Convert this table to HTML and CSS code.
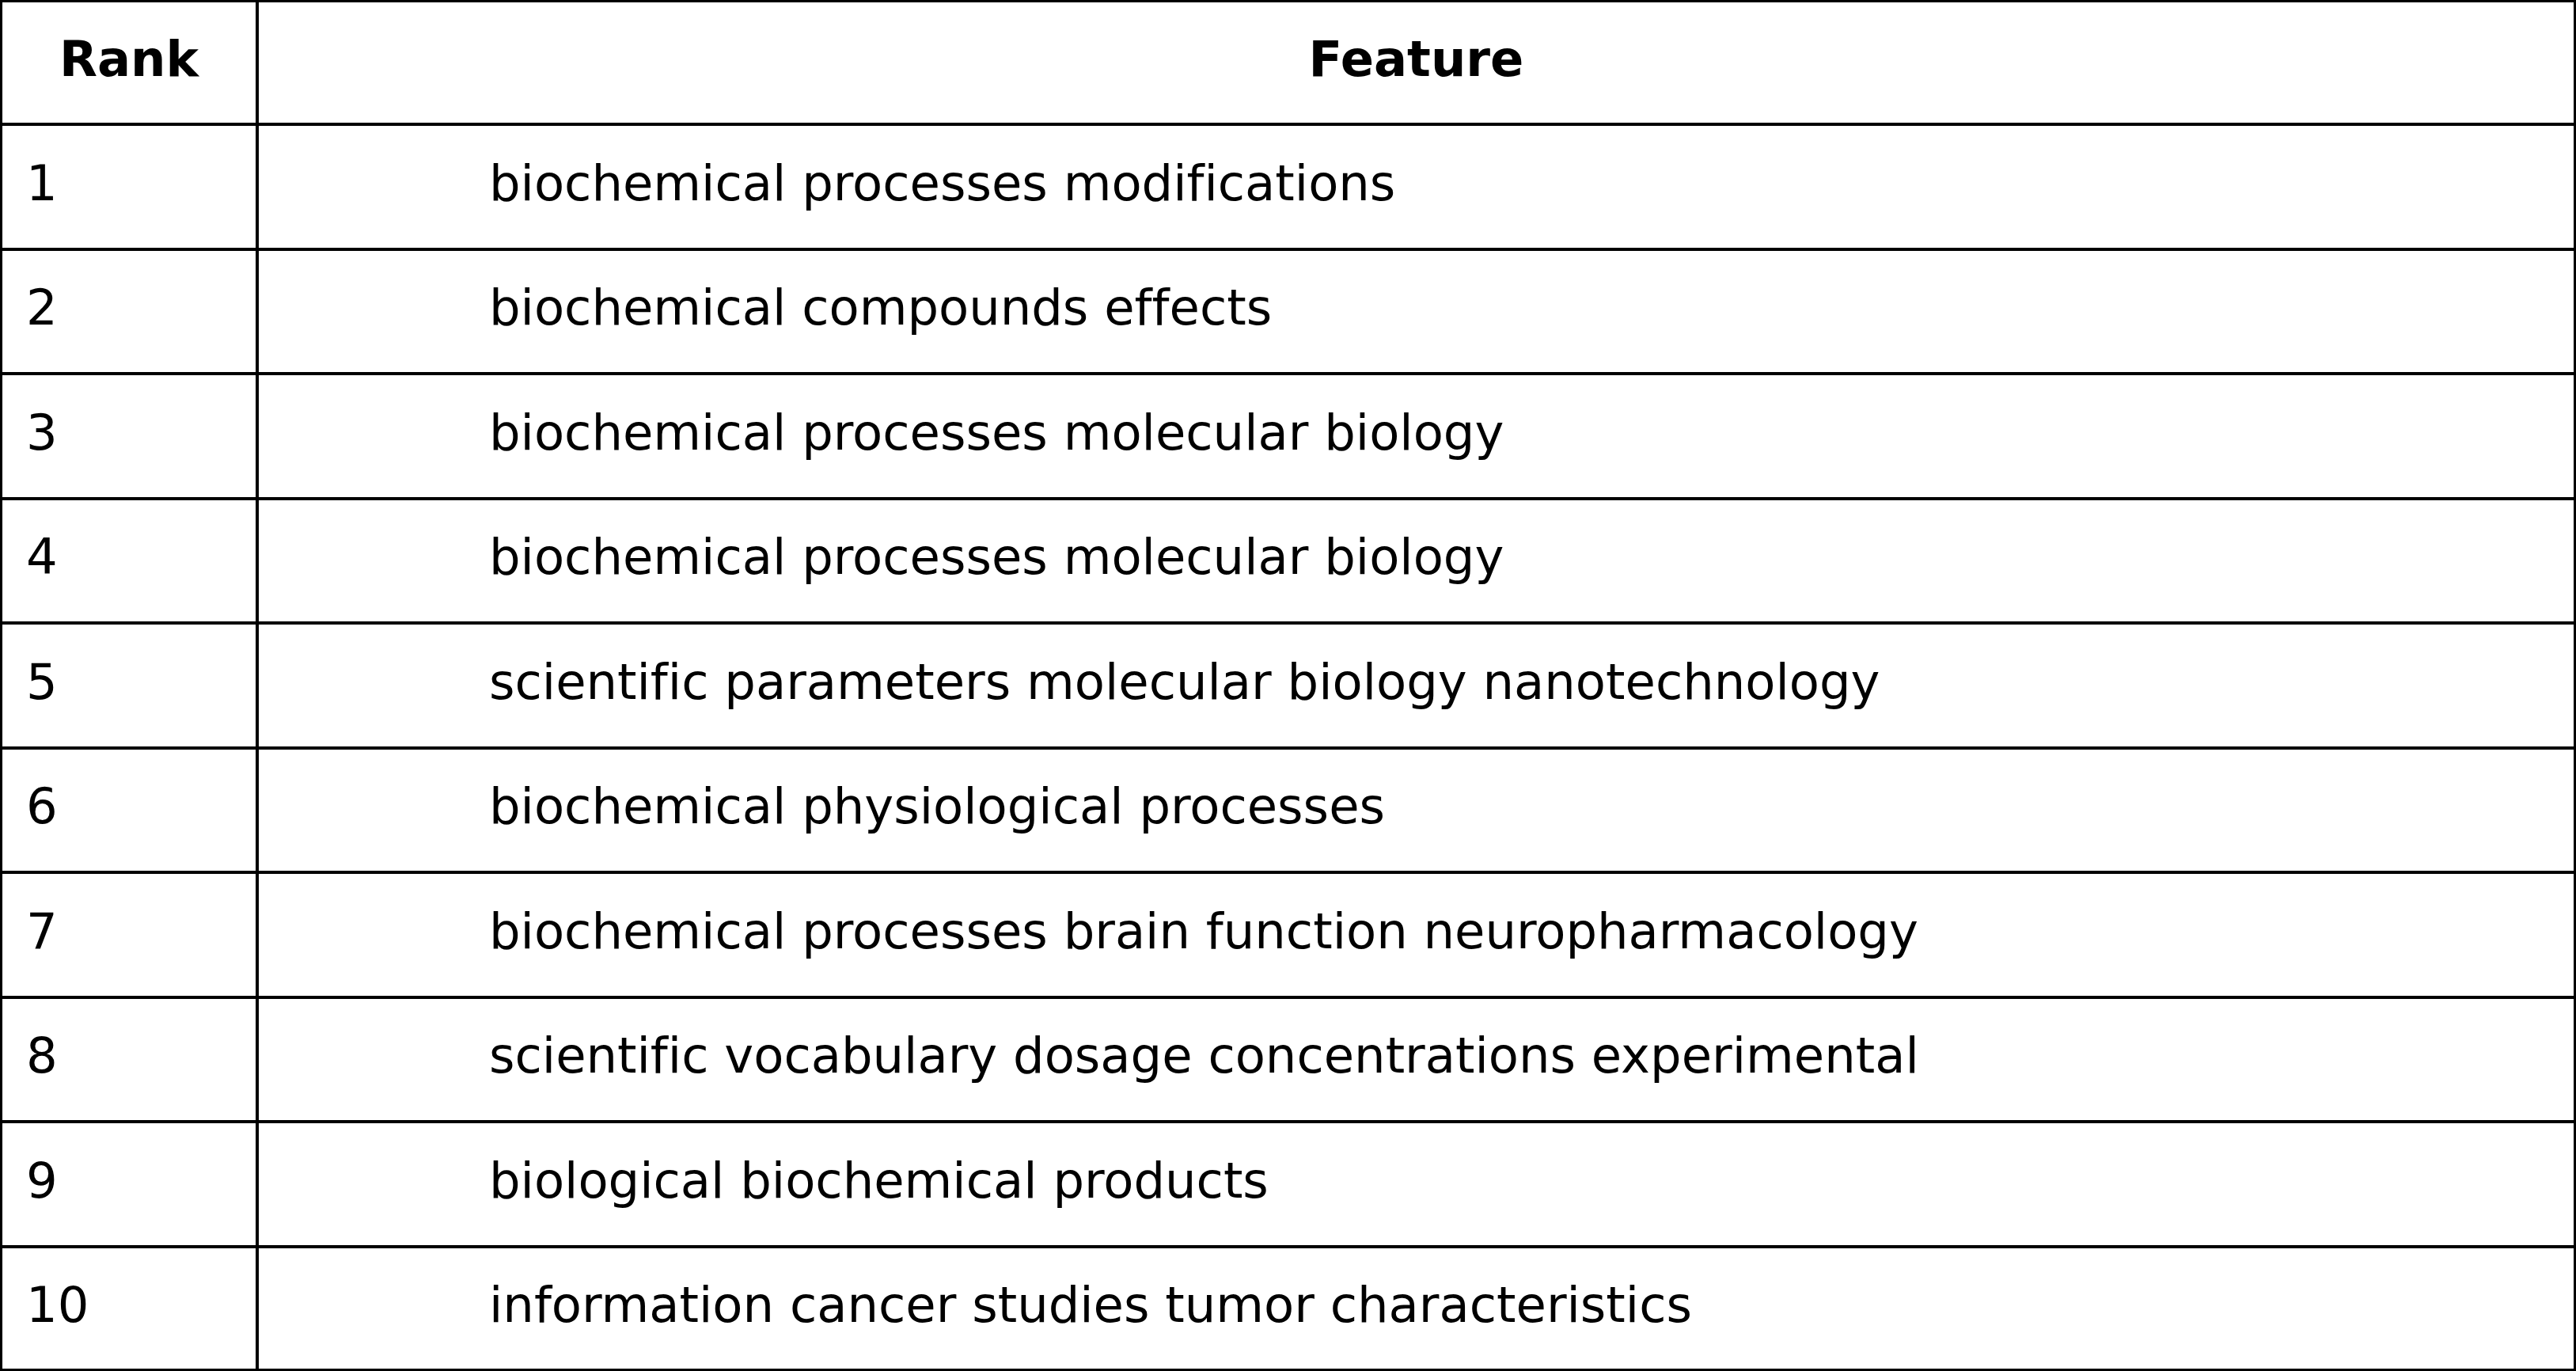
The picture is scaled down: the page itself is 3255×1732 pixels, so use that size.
FILE: index.html
```html
<!DOCTYPE html>
<html lang="en">
<head>
<meta charset="utf-8">
<title>Feature ranking</title>
<link rel="stylesheet" href="styles.css">
</head>
<body>
<div class="table">
  <div class="cell head rank">Rank</div>
  <div class="cell head feat">Feature</div>
  <div class="cell rank-num">1</div><div class="cell feat feat-text">biochemical processes modifications</div>
  <div class="cell rank-num">2</div><div class="cell feat feat-text">biochemical compounds effects</div>
  <div class="cell rank-num">3</div><div class="cell feat feat-text">biochemical processes molecular biology</div>
  <div class="cell rank-num">4</div><div class="cell feat feat-text">biochemical processes molecular biology</div>
  <div class="cell rank-num">5</div><div class="cell feat feat-text">scientific parameters molecular biology nanotechnology</div>
  <div class="cell rank-num">6</div><div class="cell feat feat-text">biochemical physiological processes</div>
  <div class="cell rank-num">7</div><div class="cell feat feat-text">biochemical processes brain function neuropharmacology</div>
  <div class="cell rank-num">8</div><div class="cell feat feat-text">scientific vocabulary dosage concentrations experimental</div>
  <div class="cell rank-num">9</div><div class="cell feat feat-text">biological biochemical products</div>
  <div class="cell rank-num last">10</div><div class="cell feat feat-text last">information cancer studies tumor characteristics</div>
</div>
</body>
</html>
```
FILE: styles.css
```css
html, body {
  margin: 0;
  padding: 0;
  background: #ffffff;
}
.table {
  box-sizing: border-box;
  width: 3255px;
  height: 1732px;
  display: grid;
  grid-template-columns: 324px 1fr;
  grid-template-rows: 156px repeat(9, 157.5px) 1fr;
  border: 3px solid #000;
  font-family: "DejaVu Sans", "Liberation Sans", sans-serif;
  font-size: 62.4px;
  font-variant-ligatures: none;
  font-feature-settings: "liga" 0, "clig" 0;
  color: #000;
}
.cell {
  box-sizing: border-box;
  border-right: 4px solid #000;
  border-bottom: 4px solid #000;
  display: flex;
  align-items: center;
  white-space: nowrap;
  line-height: 1;
  padding-bottom: 8px;
}
.feat {
  border-right: none;
}
.last {
  border-bottom: none;
}
.head {
  font-weight: bold;
  justify-content: center;
}
.rank-num {
  padding-left: 30px;
}
.feat-text {
  padding-left: 291px;
}
```
